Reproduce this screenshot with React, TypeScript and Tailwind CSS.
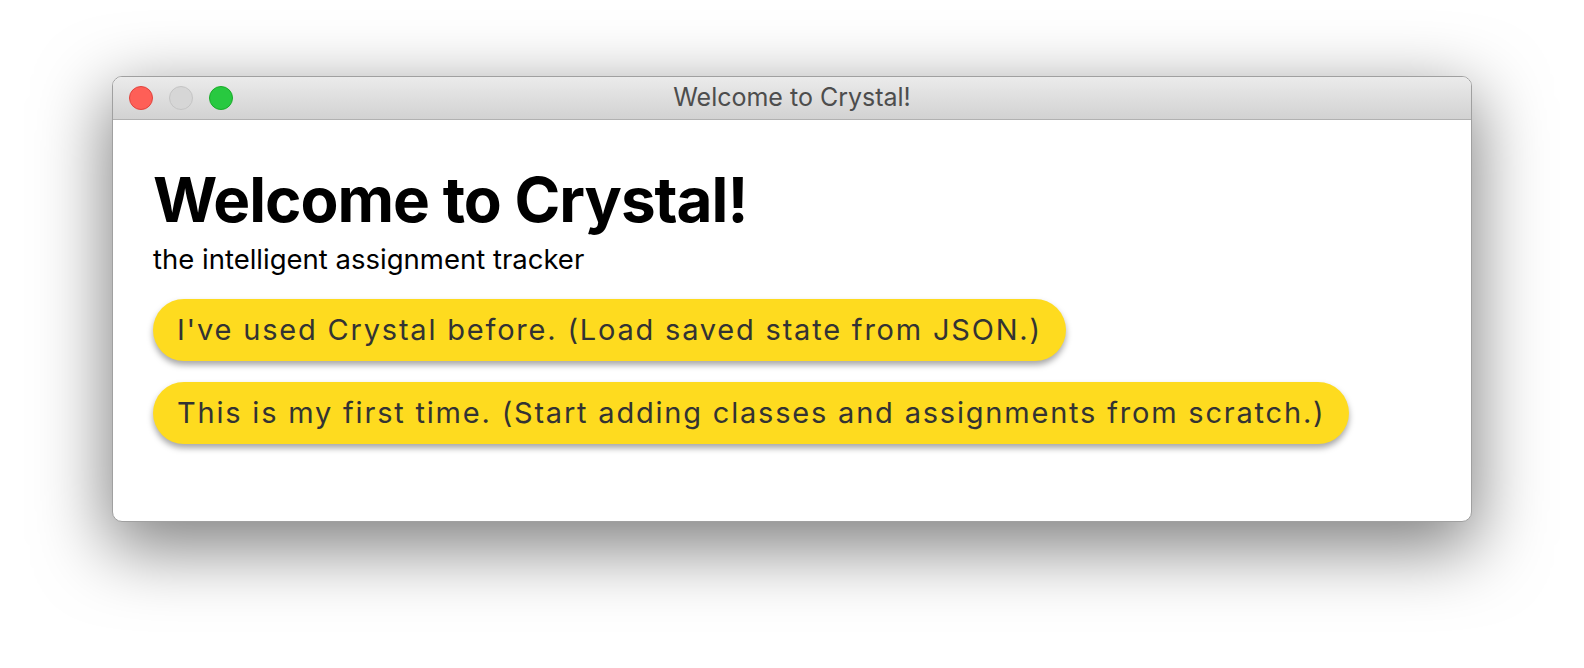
const bodyFont = { fontFamily: "Inter, 'Noto Sans', sans-serif" };

function TrafficLights() {
  return (
    <div className="flex items-center gap-[16px]">
      <span className="h-[24px] w-[24px] rounded-full border border-[#e0443e] bg-[#fe5f57]" />
      <span className="h-[24px] w-[24px] rounded-full border border-[#c4c4c4] bg-[#d6d6d6]" />
      <span className="h-[24px] w-[24px] rounded-full border border-[#1aab29] bg-[#28c940]" />
    </div>
  );
}

function ChoiceButton({ label }: { label: string }) {
  return (
    <button
      type="button"
      className="h-[62px] self-start rounded-full bg-[#fedb1f] px-[24px] text-[29px] tracking-[1.8px] text-[#333333] shadow-[0_4px_6px_rgba(0,0,0,0.35)]"
    >
      {label}
    </button>
  );
}

export default function App() {
  return (
    <div className="h-[668px] w-[1584px] overflow-hidden bg-white pl-[112px] pt-[76px]" style={bodyFont}>
      <div className="flex h-[446px] w-[1360px] flex-col overflow-hidden rounded-[10px] border border-[#a0a0a0] bg-white shadow-[0_22px_70px_4px_rgba(0,0,0,0.5)]">
        <div className="relative flex h-[43px] shrink-0 items-center border-b border-[#b1b1b1] bg-gradient-to-b from-[#ebebeb] to-[#d2d2d2] px-[16px]">
          <TrafficLights />
          <div className="absolute inset-0 flex items-center justify-center text-[25px] text-[#4d4d4d]">
            Welcome to Crystal!
          </div>
        </div>
        <div className="flex flex-col px-[40px] pt-[49px]">
          <h1 className="text-[62px] font-bold leading-[1] tracking-[-1px] text-black">Welcome to Crystal!</h1>
          <p className="mt-[12px] text-[27.5px] leading-[1.2] text-black">the intelligent assignment tracker</p>
          <div className="mt-[23px] flex flex-col gap-[21px]">
            <ChoiceButton label="I've used Crystal before. (Load saved state from JSON.)" />
            <ChoiceButton label="This is my first time. (Start adding classes and assignments from scratch.)" />
          </div>
        </div>
      </div>
    </div>
  );
}
